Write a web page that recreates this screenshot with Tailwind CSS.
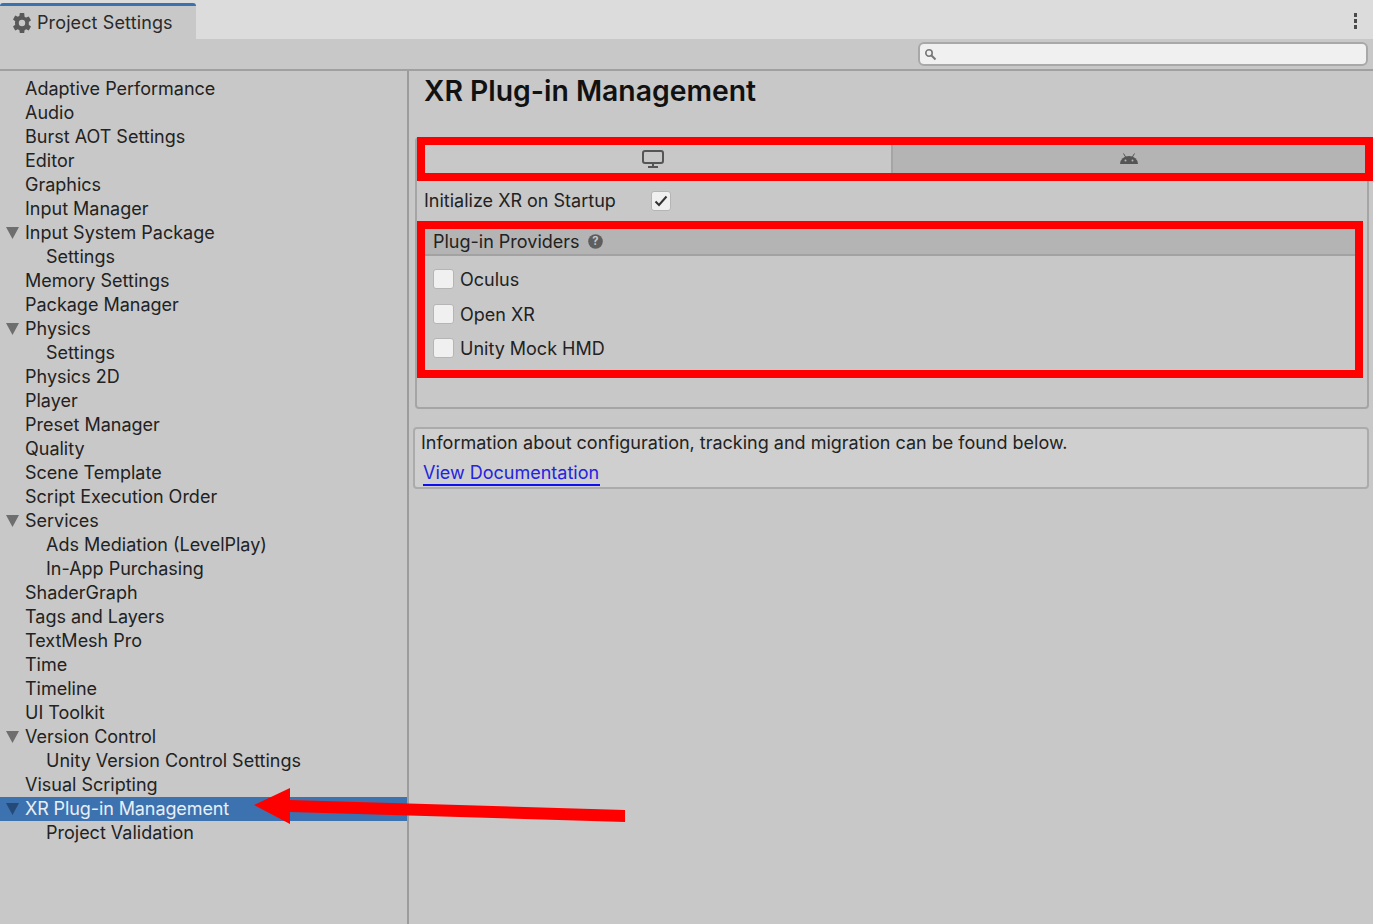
<!DOCTYPE html>
<html lang="en">
<head>
    <meta charset="UTF-8">
    <title>Project Settings</title>
    <script src="https://cdn.jsdelivr.net/npm/@tailwindcss/browser@4"></script>
</head>
<body class="relative w-[1373px] h-[924px] overflow-hidden bg-[#c8c8c8] font-['Inter',sans-serif] text-[18px] leading-6 text-[#222222]">
    <!-- tab bar -->
    <div class="h-[39px] bg-[#dcdcdc] flex justify-between">
        <div class="mt-[3px] w-[196px] h-[36px] bg-[#c8c8c8] border-t-[3px] border-[#3a72b0] rounded-t-[3px] flex items-center pl-[11px] pt-[1px] gap-[4px] text-[#2a2a2a] tracking-[0.12px]">
            <svg class="w-[22px] h-[22px]" viewBox="0 0 24 24" fill="#595959"><path fill-rule="evenodd" d="M19.4 13a7.6 7.6 0 0 0 0-2l2.4-1.9-2.4-4.2-2.9 1.2a7.4 7.4 0 0 0-1.7-1L14.4 1H9.6l-.4 3.1a7.4 7.4 0 0 0-1.7 1L4.6 3.9 2.2 8.1 4.6 10a7.6 7.6 0 0 0 0 4l-2.4 1.9 2.4 4.2 2.9-1.2a7.4 7.4 0 0 0 1.7 1l.4 3.1h4.8l.4-3.1a7.4 7.4 0 0 0 1.7-1l2.9 1.2 2.4-4.2L19.4 14zM12 15.5a3.5 3.5 0 1 1 0-7 3.5 3.5 0 0 1 0 7z"/></svg>
            <span>Project Settings</span>
        </div>
        <div class="flex flex-col gap-[2.5px] pt-[13px] pr-[16px]">
            <span class="w-[3px] h-[3.5px] bg-[#4a4a4a]"></span>
            <span class="w-[3px] h-[3.5px] bg-[#4a4a4a]"></span>
            <span class="w-[3px] h-[3.5px] bg-[#4a4a4a]"></span>
        </div>
    </div>

    <!-- toolbar with search -->
    <div class="h-[32px] border-b-2 border-[#a0a0a0] flex justify-end pt-[3px] pr-[5px]">
        <div class="w-[450px] h-[24px] bg-[#f0f0f0] border-2 border-[#a8a8a8] rounded-[6px] flex items-center pl-[4px]">
            <svg class="w-[13px] h-[13px]" viewBox="0 0 13 13" fill="none" stroke="#777777"><circle cx="5" cy="5" r="3.2" stroke-width="1.6"/><path d="M7.5 7.5l4 4" stroke-width="2"/></svg>
        </div>
    </div>

    <div class="flex h-[853px]">
        <!-- sidebar -->
        <div class="w-[409px] border-r-2 border-[#9c9c9c] pt-[6px] shrink-0">
            <div class="pl-[25px] h-6">Adaptive Performance</div>
            <div class="pl-[25px] h-6">Audio</div>
            <div class="pl-[25px] h-6">Burst AOT Settings</div>
            <div class="pl-[25px] h-6">Editor</div>
            <div class="pl-[25px] h-6">Graphics</div>
            <div class="pl-[25px] h-6">Input Manager</div>
            <div class="h-6 flex items-center pl-[6px] gap-[6px]"><svg class="w-[13px] h-[12px]" viewBox="0 0 13 12" fill="#6e6e6e"><path d="M0 0h13L6.5 12z"/></svg><span>Input System Package</span></div>
            <div class="pl-[46px] h-6">Settings</div>
            <div class="pl-[25px] h-6">Memory Settings</div>
            <div class="pl-[25px] h-6">Package Manager</div>
            <div class="h-6 flex items-center pl-[6px] gap-[6px]"><svg class="w-[13px] h-[12px]" viewBox="0 0 13 12" fill="#6e6e6e"><path d="M0 0h13L6.5 12z"/></svg><span>Physics</span></div>
            <div class="pl-[46px] h-6">Settings</div>
            <div class="pl-[25px] h-6">Physics 2D</div>
            <div class="pl-[25px] h-6">Player</div>
            <div class="pl-[25px] h-6">Preset Manager</div>
            <div class="pl-[25px] h-6">Quality</div>
            <div class="pl-[25px] h-6">Scene Template</div>
            <div class="pl-[25px] h-6">Script Execution Order</div>
            <div class="h-6 flex items-center pl-[6px] gap-[6px]"><svg class="w-[13px] h-[12px]" viewBox="0 0 13 12" fill="#6e6e6e"><path d="M0 0h13L6.5 12z"/></svg><span>Services</span></div>
            <div class="pl-[46px] h-6">Ads Mediation (LevelPlay)</div>
            <div class="pl-[46px] h-6">In-App Purchasing</div>
            <div class="pl-[25px] h-6">ShaderGraph</div>
            <div class="pl-[25px] h-6">Tags and Layers</div>
            <div class="pl-[25px] h-6">TextMesh Pro</div>
            <div class="pl-[25px] h-6">Time</div>
            <div class="pl-[25px] h-6">Timeline</div>
            <div class="pl-[25px] h-6">UI Toolkit</div>
            <div class="h-6 flex items-center pl-[6px] gap-[6px]"><svg class="w-[13px] h-[12px]" viewBox="0 0 13 12" fill="#6e6e6e"><path d="M0 0h13L6.5 12z"/></svg><span>Version Control</span></div>
            <div class="pl-[46px] h-6">Unity Version Control Settings</div>
            <div class="pl-[25px] h-6">Visual Scripting</div>
            <div class="h-6 flex items-center pl-[6px] gap-[6px] bg-[#3c72b0] text-[#e8eef6]"><svg class="w-[13px] h-[12px]" viewBox="0 0 13 12" fill="#234a78"><path d="M0 0h13L6.5 12z"/></svg><span class="tracking-[-0.1px]">XR Plug-in Management</span></div>
            <div class="pl-[46px] h-6">Project Validation</div>
        </div>

        <!-- main panel -->
        <div class="flex-1 min-w-0 pl-[4px] pr-[4px]">
            <h1 class="text-[28.35px] leading-[34px] font-semibold text-[#111111] pl-[11px] pt-[3px] h-[66px]">XR Plug-in Management</h1>
            <div class="ml-[2px] h-[272px] border-2 border-[#a5a5a5] rounded-[4px] pt-[6px]">
                <div class="flex h-[28px] ml-[8px] mr-[2px]">
                    <div class="w-[468px] bg-[#c8c8c8] border-r-2 border-[#a5a5a5] flex items-center justify-center pr-[10px]">
                        <svg class="w-[22px] h-[18px]" viewBox="0 0 22 18" fill="none" stroke="#555555" stroke-width="2"><rect x="1" y="1" width="20" height="12" rx="2"/><path d="M11 13v3M6 17h10"/></svg>
                    </div>
                    <div class="flex-1 bg-[#b4b4b4] flex items-center justify-center">
                        <svg class="w-[18px] h-[12px]" viewBox="0 0 18 12" fill="#555555"><path d="M0 11a9 8 0 0 1 18 0z"/><path d="M3.5 0.5l2.4 4M14.5 0.5l-2.4 4" stroke="#555555" stroke-width="1"/><circle cx="5.5" cy="7.5" r="1" fill="#b4b4b4"/><circle cx="12.5" cy="7.5" r="1" fill="#b4b4b4"/></svg>
                    </div>
                </div>
                <div class="flex items-center h-[40px] pl-[7px] mt-[8px]">
                    <span class="w-[227px]">Initialize XR on Startup</span>
                    <span class="w-[20px] h-[20px] bg-[#f0f0f0] border border-[#b5b5b5] rounded-[3px] flex items-center justify-center">
                        <svg class="w-[14px] h-[12px]" viewBox="0 0 14 12" fill="none" stroke="#333333" stroke-width="2"><path d="M1.5 6.5l3.5 3.5 7.5-8.5"/></svg>
                    </span>
                </div>
                <div class="ml-[8px] mr-[12px]">
                    <div class="h-[27px] bg-[#b4b4b4] border-b-2 border-[#a2a2a2] flex items-center pl-[8px] gap-[8px] mt-[8px]">
                        <span>Plug-in Providers</span>
                        <svg class="w-[15px] h-[15px]" viewBox="0 0 16 16"><circle cx="8" cy="8" r="7.8" fill="#5e5e5e"/><text x="8" y="12.2" text-anchor="middle" font-size="12" font-weight="700" fill="#c8c8c8" font-family="Inter">?</text></svg>
                    </div>
                    <div class="flex items-center h-[20px] mt-[14px] pl-[8px] gap-[6px]">
                        <span class="w-[21px] h-[20px] -translate-y-px bg-[#f0f0f0] border border-[#b5b5b5] rounded-[3px]"></span><span>Oculus</span>
                    </div>
                    <div class="flex items-center h-[20px] mt-[15px] pl-[8px] gap-[6px]">
                        <span class="w-[21px] h-[20px] -translate-y-px bg-[#f0f0f0] border border-[#b5b5b5] rounded-[3px]"></span><span>Open XR</span>
                    </div>
                    <div class="flex items-center h-[20px] mt-[14px] pl-[8px] gap-[6px]">
                        <span class="w-[21px] h-[20px] -translate-y-px bg-[#f0f0f0] border border-[#b5b5b5] rounded-[3px]"></span><span>Unity Mock HMD</span>
                    </div>
                </div>
            </div>
            <div class="mt-[18px] h-[62px] bg-[#cfcfcf] border-2 border-[#ababab] rounded-[4px] pl-[6px] pt-[2px]">
                <div>Information about configuration, tracking and migration can be found below.</div>
                <a class="inline-block mt-[6px] ml-[2px] text-[#2323e0] border-b-2 border-[#1010ee] leading-[23px] pr-[1px]" href="#">View Documentation</a>
            </div>
        </div>
    </div>

    <!-- red annotations -->
    <div class="absolute left-[417px] top-[137px] w-[956px] h-[44px] border-[8px] border-[#ff0000]"></div>
    <div class="absolute left-[417px] top-[221px] w-[946px] h-[157px] border-[8px] border-[#ff0000]"></div>
    <svg class="absolute left-0 top-0 w-[1373px] h-[924px] pointer-events-none" viewBox="0 0 1373 924"><polygon fill="#ff0000" points="254,805 290,788 290,800 625,810 625,822 290,812 290,824"/></svg>
</body>
</html>
